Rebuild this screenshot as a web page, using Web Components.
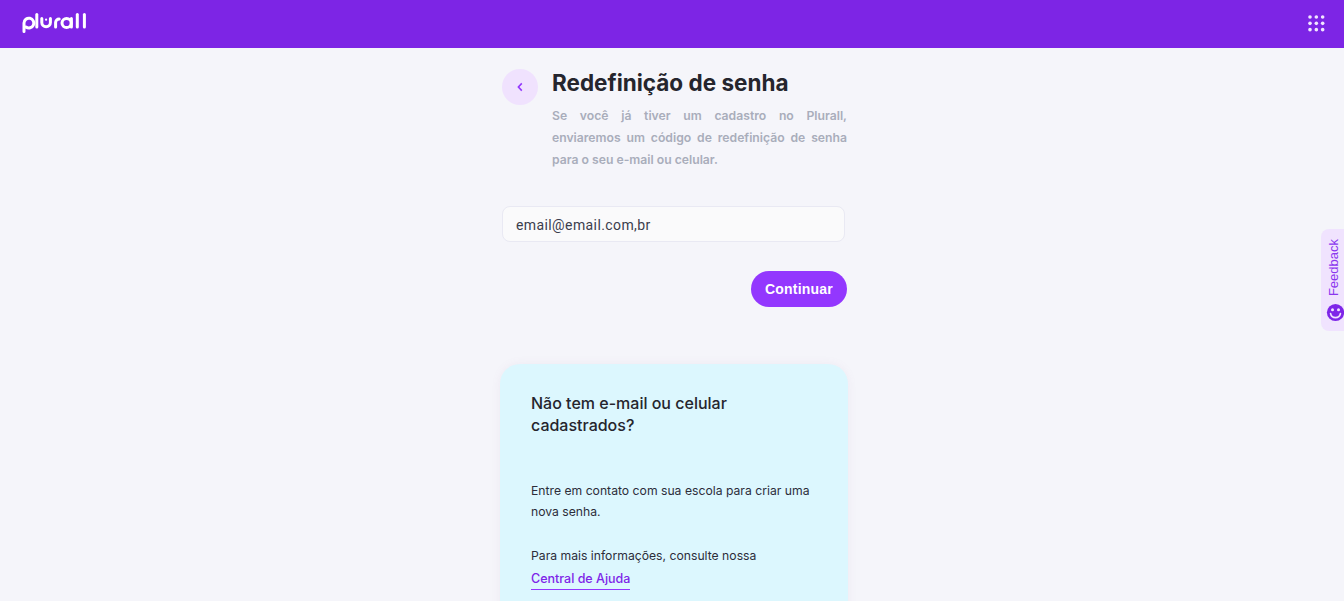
<!DOCTYPE html>
<html lang="pt-BR">
<head>
<meta charset="utf-8">
<title>Plurall</title>
<style>
    html, body { margin: 0; height: 601px; overflow: hidden; background: #f5f5fa; }
    body { font-family: "Inter", "Liberation Sans", sans-serif; color: #25252d; }
</style>
</head>
<body>
<plurall-app>
    <plurall-header></plurall-header>
    <reset-page>
        <reset-heading title="Redefinição de senha">Se você já tiver um cadastro no Plurall, enviaremos um código de redefinição de senha para o seu e-mail ou celular.</reset-heading>
        <email-field value="email@email.com,br"></email-field>
        <continue-button>Continuar</continue-button>
        <help-card heading="Não tem e-mail ou celular cadastrados?">
            <p>Entre em contato com sua escola para criar uma nova senha.</p>
            <p>Para mais informações, consulte nossa</p>
            <a href="#">Central de Ajuda</a>
        </help-card>
    </reset-page>
    <feedback-tab></feedback-tab>
</plurall-app>

<script>
class PlurallApp extends HTMLElement {
    constructor() {
        super();
        this.attachShadow({ mode: 'open' });
        this.shadowRoot.innerHTML = `
        <style>
            :host { display: block; position: relative; height: 601px; overflow: hidden; }
        </style>
        <slot></slot>
        `;
    }
}

class PlurallHeader extends HTMLElement {
    constructor() {
        super();
        this.attachShadow({ mode: 'open' });

        // the apps grid is 3 x 3 dots
        let dots = '';
        for (let y = 0; y < 3; y++) {
            for (let x = 0; x < 3; x++) {
                dots += `<circle cx="${2 + x * 6.33}" cy="${2 + y * 6.33}" r="1.8"/>`;
            }
        }

        this.shadowRoot.innerHTML = `
        <style>
            :host { display: flex; align-items: center; justify-content: space-between; height: 48px; padding: 0 19px 0 22px; background: #7d25e5; }
            svg { display: block; }
            .logo { margin-top: -4px; }
            .apps { margin-top: -2px; }
        </style>
        <svg class="logo" width="65" height="24" viewBox="0 0 65 24" role="img" aria-label="plurall" fill="none" stroke="#fff" stroke-width="3" stroke-linecap="round">
            <path d="M2 21.6V13a4.9 4.9 0 1 1 2 4"/>
            <path d="M14.8 4.5V17"/>
            <path d="M19.8 8.5v4a4.3 4.3 0 0 0 8.6 0v-4"/>
            <path d="M24.1 9.6v.1" stroke-width="2.2"/>
            <path d="M33.6 17V12.6a3.6 3.6 0 0 1 3.6-3.6"/>
            <circle cx="44.6" cy="13" r="4.6"/>
            <path d="M49.4 8.6V17"/>
            <path d="M55.3 4.5V17"/>
            <path d="M62.4 4.5V17"/>
        </svg>
        <svg class="apps" width="17" height="17" viewBox="0 0 17 17" fill="#f1e6ff" aria-hidden="true">${dots}</svg>
        `;
    }
}

class ResetPage extends HTMLElement {
    constructor() {
        super();
        this.attachShadow({ mode: 'open' });
        this.shadowRoot.innerHTML = `
        <style>
            :host { display: flex; flex-direction: column; width: 349px; margin: 0 auto; padding-left: 5px; }
        </style>
        <slot></slot>
        `;
    }
}

class ResetHeading extends HTMLElement {
    constructor() {
        super();
        this.attachShadow({ mode: 'open' });
        this.shadowRoot.innerHTML = `
        <style>
            :host { display: grid; grid-template-columns: 36px 295px; column-gap: 14px; padding: 21px 0 0 2px; }
            .back { width: 36px; height: 36px; border-radius: 50%; background: #f0e2fe; display: flex; align-items: center; justify-content: center; }
            h1 { margin: 0; font: 700 22.5px/28px "Inter", "Liberation Sans", sans-serif; color: #25252d; }
            p { margin: 8px 0 0; font: 600 12.2px/22px "Inter", "Liberation Sans", sans-serif; color: #a9adbb; text-align: justify; }
        </style>
        <div class="back">
            <svg width="8" height="10" viewBox="0 0 8 10" fill="none" stroke="#9337fe" stroke-width="1.6" aria-hidden="true"><path d="M5.8 1.4 2.4 5l3.4 3.6"/></svg>
        </div>
        <div>
            <h1></h1>
            <p><slot></slot></p>
        </div>
        `;
    }

    connectedCallback() {
        this.shadowRoot.querySelector('h1').textContent = this.getAttribute('title');
    }
}

class EmailField extends HTMLElement {
    constructor() {
        super();
        this.attachShadow({ mode: 'open' });
        this.shadowRoot.innerHTML = `
        <style>
            :host { display: block; margin: 35px 0 0 2px; width: 343px; }
            input { display: block; box-sizing: border-box; width: 100%; height: 36px; padding: 1px 13px 0; border: 1px solid #e9e9f3; border-radius: 8px; background: #fafafb; font: 400 14px "Roboto", sans-serif; letter-spacing: .4px; color: #3b3d4d; outline: none; }
        </style>
        <input type="text">
        `;
    }

    connectedCallback() {
        this.shadowRoot.querySelector('input').value = this.getAttribute('value');
    }
}

class ContinueButton extends HTMLElement {
    constructor() {
        super();
        this.attachShadow({ mode: 'open' });
        this.shadowRoot.innerHTML = `
        <style>
            :host { display: flex; justify-content: flex-end; margin: 29px 2px 0 0; }
            button { width: 96px; height: 36px; padding: 0; border: 0; border-radius: 18px; background: #9337fe; color: #fff; font: 700 14px "Liberation Sans", sans-serif; letter-spacing: .2px; }
        </style>
        <button><slot></slot></button>
        `;
    }
}

class HelpCard extends HTMLElement {
    constructor() {
        super();
        this.attachShadow({ mode: 'open' });
        this.shadowRoot.innerHTML = `
        <style>
            :host { display: block; box-sizing: border-box; width: 348px; height: 300px; margin-top: 57px; padding: 28px 24px 0 31px; border-radius: 20px; background: #dcf7fe; box-shadow: 0 0 10px rgba(150, 100, 150, .08); }
            h2 { margin: 0 0 44px; max-width: 240px; font: 500 16px/22px "Inter", "Liberation Sans", sans-serif; color: #25252d; }
            ::slotted(p) { margin: 0 0 23px; font: 400 12.2px/21px "Inter", "Liberation Sans", sans-serif; color: #2c2d3a; }
            ::slotted(p:nth-of-type(2)) { margin-bottom: .5px; }
            ::slotted(a) { display: inline-block; font: 500 12.5px/21px "Inter", "Liberation Sans", sans-serif; color: #7e25e8; text-decoration: none; border-bottom: 1px solid #9337fe; }
        </style>
        <h2></h2>
        <slot></slot>
        `;
    }

    connectedCallback() {
        this.shadowRoot.querySelector('h2').textContent = this.getAttribute('heading');
    }
}

class FeedbackTab extends HTMLElement {
    constructor() {
        super();
        this.attachShadow({ mode: 'open' });
        this.shadowRoot.innerHTML = `
        <style>
            :host { position: absolute; top: 229px; right: 0; width: 23px; height: 102px; box-sizing: border-box; padding-bottom: 9.5px; border-radius: 8px 0 0 8px; background: #f0e3fe; display: flex; flex-direction: column-reverse; align-items: center; gap: 6px; }
            span { writing-mode: vertical-rl; transform: rotate(180deg); margin-left: 3px; font: 400 13px/16px "Liberation Sans", sans-serif; color: #8b36ee; }
            svg { display: block; flex: none; align-self: flex-start; margin-left: 4.5px; }
        </style>
        <svg width="19" height="19" viewBox="0 0 19 19" aria-hidden="true">
            <circle cx="9.5" cy="9.5" r="8.6" fill="#7e25e8"/>
            <circle cx="6.5" cy="6.8" r="1.5" fill="#f0e3fe"/>
            <circle cx="12.5" cy="6.8" r="1.5" fill="#f0e3fe"/>
            <path d="M4.6 10.6a5 5 0 0 0 9.8 0" fill="none" stroke="#f0e3fe" stroke-width="1.7" stroke-linecap="round"/>
        </svg>
        <span>Feedback</span>
        `;
    }
}

customElements.define('plurall-app', PlurallApp);
customElements.define('plurall-header', PlurallHeader);
customElements.define('reset-page', ResetPage);
customElements.define('reset-heading', ResetHeading);
customElements.define('email-field', EmailField);
customElements.define('continue-button', ContinueButton);
customElements.define('help-card', HelpCard);
customElements.define('feedback-tab', FeedbackTab);
</script>
</body>
</html>
